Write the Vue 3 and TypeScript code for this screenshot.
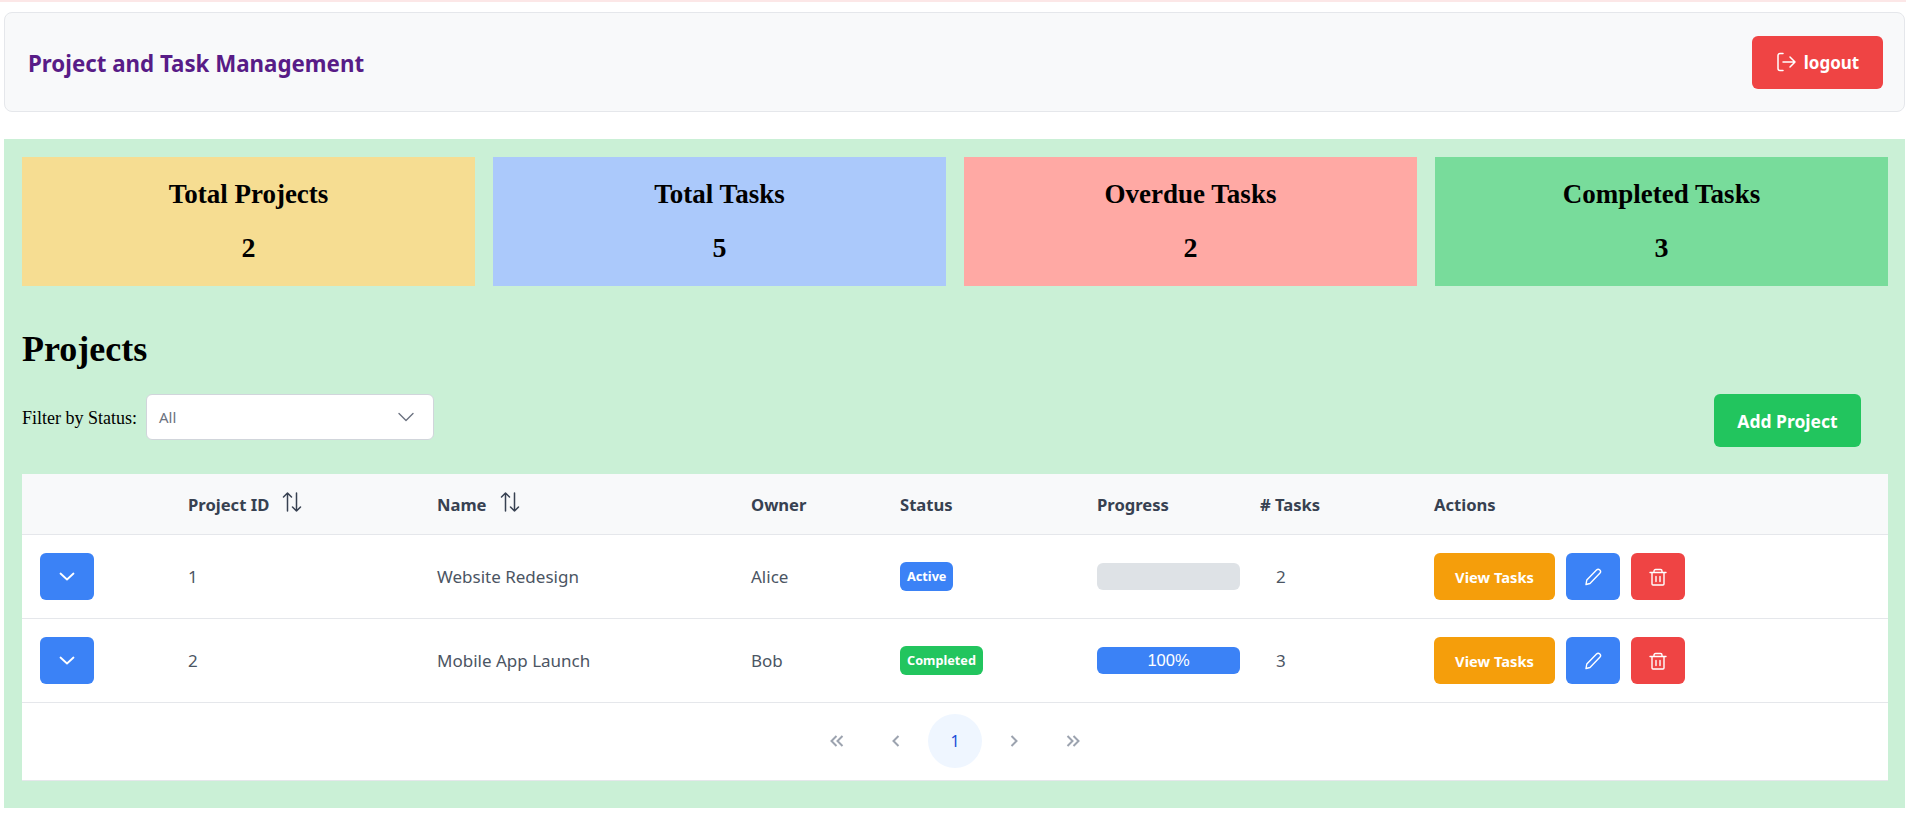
<script setup lang="ts">
interface Stat {
  label: string;
  value: number;
  tone: string;
}

interface Project {
  id: number;
  name: string;
  owner: string;
  status: string;
  progress: number;
  tasks: number;
}

const stats: Stat[] = [
  { label: "Total Projects", value: 2, tone: "yellow" },
  { label: "Total Tasks", value: 5, tone: "blue" },
  { label: "Overdue Tasks", value: 2, tone: "red" },
  { label: "Completed Tasks", value: 3, tone: "green" },
];

const projects: Project[] = [
  { id: 1, name: "Website Redesign", owner: "Alice", status: "Active", progress: 0, tasks: 2 },
  { id: 2, name: "Mobile App Launch", owner: "Bob", status: "Completed", progress: 100, tasks: 3 },
];
</script>

<template>
  <div class="page">
    <header class="header">
      <h1>Project and Task Management</h1>
      <button class="btn logout">
        <svg width="20" height="20" viewBox="0 0 20 20" fill="none" stroke="currentColor" stroke-width="1.5" stroke-linecap="round" stroke-linejoin="round">
          <path d="M7 1.5H4a2 2 0 0 0-2 2v13a2 2 0 0 0 2 2h3" />
          <path d="M7 10h12M14 5l5 5-5 5" />
        </svg>
        logout
      </button>
    </header>

    <main class="board">
      <section class="stats">
        <div v-for="s in stats" :key="s.label" class="stat" :class="s.tone">
          <h2>{{ s.label }}</h2>
          <p>{{ s.value }}</p>
        </div>
      </section>

      <h2 class="title">Projects</h2>

      <div class="toolbar">
        <div class="filter">
          <label>Filter by Status:</label>
          <div class="select">
            <span>All</span>
            <svg width="16" height="16" viewBox="0 0 16 16" fill="none" stroke="currentColor" stroke-width="1.4" stroke-linecap="round" stroke-linejoin="round">
              <path d="M1 4.5 8 11.5l7-7" />
            </svg>
          </div>
        </div>
        <button class="btn add">Add Project</button>
      </div>

      <div class="card">
        <table>
          <colgroup>
            <col style="width: 150px" />
            <col style="width: 249px" />
            <col style="width: 314px" />
            <col style="width: 149px" />
            <col style="width: 197px" />
            <col style="width: 163px" />
            <col style="width: 174px" />
            <col />
          </colgroup>
          <thead>
            <tr>
              <th></th>
              <th>
                <span class="sort">Project ID
                  <svg width="20" height="20" viewBox="0 0 20 20" fill="none" stroke="currentColor" stroke-width="1.5" stroke-linecap="round" stroke-linejoin="round">
                    <path d="M5.5 19V1M1.5 5l4-4 4 4M14.5 1v18M10.5 15l4 4 4-4" />
                  </svg>
                </span>
              </th>
              <th>
                <span class="sort">Name
                  <svg width="20" height="20" viewBox="0 0 20 20" fill="none" stroke="currentColor" stroke-width="1.5" stroke-linecap="round" stroke-linejoin="round">
                    <path d="M5.5 19V1M1.5 5l4-4 4 4M14.5 1v18M10.5 15l4 4 4-4" />
                  </svg>
                </span>
              </th>
              <th>Owner</th>
              <th>Status</th>
              <th>Progress</th>
              <th># Tasks</th>
              <th>Actions</th>
            </tr>
          </thead>
          <tbody>
            <tr v-for="p in projects" :key="p.id">
              <td class="first">
                <button class="btn expand">
                  <svg width="16" height="16" viewBox="0 0 16 16" fill="none" stroke="currentColor" stroke-width="1.8" stroke-linecap="round" stroke-linejoin="round">
                    <path d="M1.5 4.500 8 10.500l6.500-6" />
                  </svg>
                </button>
              </td>
              <td>{{ p.id }}</td>
              <td>{{ p.name }}</td>
              <td>{{ p.owner }}</td>
              <td>
                <span class="badge" :class="p.status.toLowerCase()">{{ p.status }}</span>
              </td>
              <td>
                <div class="progress">
                  <div v-if="p.progress" class="bar" :style="{ width: p.progress + '%' }">{{ p.progress }}%</div>
                </div>
              </td>
              <td class="count">{{ p.tasks }}</td>
              <td>
                <div class="actions">
                  <button class="btn view">View Tasks</button>
                  <button class="btn icon edit">
                    <svg width="18" height="18" viewBox="0 0 18 18" fill="none" stroke="currentColor" stroke-width="1.4" stroke-linecap="round" stroke-linejoin="round">
                      <path d="M12.5 2a2.3 2.3 0 0 1 3.300 3.300L6 15.500l-4 1 .8-4.500z" />
                    </svg>
                  </button>
                  <button class="btn icon delete">
                    <svg width="18" height="18" viewBox="0 0 18 18" fill="none" stroke="currentColor" stroke-width="1.4" stroke-linecap="round" stroke-linejoin="round">
                      <path d="M1 4.500h16M5 4.500V3a1.500 1.500 0 0 1 1.500-1.500h5A1.500 1.500 0 0 1 13 3v1.500M3 4.500V16a1 1 0 0 0 1 1h10a1 1 0 0 0 1-1V4.500M7 8.500v5M11 8.500v5" />
                    </svg>
                  </button>
                </div>
              </td>
            </tr>
          </tbody>
        </table>

        <nav class="pager">
          <span class="page-btn">
            <svg width="14" height="14" viewBox="0 0 14 14" fill="none" stroke="currentColor" stroke-width="2" stroke-linejoin="miter"><path d="M6.500 2 1.500 7l5 5M12.500 2l-5 5 5 5" /></svg>
          </span>
          <span class="page-btn">
            <svg width="14" height="14" viewBox="0 0 14 14" fill="none" stroke="currentColor" stroke-width="2" stroke-linejoin="miter"><path d="M9.500 2l-5 5 5 5" /></svg>
          </span>
          <span class="page-btn current">1</span>
          <span class="page-btn">
            <svg width="14" height="14" viewBox="0 0 14 14" fill="none" stroke="currentColor" stroke-width="2" stroke-linejoin="miter"><path d="M4.500 2l5 5-5 5" /></svg>
          </span>
          <span class="page-btn">
            <svg width="14" height="14" viewBox="0 0 14 14" fill="none" stroke="currentColor" stroke-width="2" stroke-linejoin="miter"><path d="M1.500 2l5 5-5 5M7.500 2l5 5-5 5" /></svg>
          </span>
        </nav>
      </div>
    </main>
  </div>
</template>

<style>
html,
body {
  background: #ffffff;
}
</style>

<style scoped>
.page {
  height: 816px;
  overflow: hidden;
  padding: 12px 1px 0 4px;
  box-sizing: border-box;
  border-top: 2px solid #fce7e7;
  font-family: "Noto Sans", sans-serif;
}

.header {
  display: flex;
  justify-content: space-between;
  align-items: center;
  height: 100px;
  box-sizing: border-box;
  padding: 0 21px 0 23px;
  margin-top: -2px;
  background: #f8f9fa;
  border: 1px solid #e5e7eb;
  border-radius: 8px;
}

h1 {
  margin: 2px 0 0;
  font-size: 22.3px;
  font-weight: 700;
  color: #581c87;
}

.btn {
  border: 0;
  border-radius: 6px;
  color: #ffffff;
  font-family: inherit;
  font-weight: 700;
  display: inline-flex;
  align-items: center;
  justify-content: center;
  padding: 0;
}

.logout {
  width: 131px;
  height: 53px;
  gap: 8px;
  background: #ef4444;
  font-size: 17px;
}

.board {
  margin-top: 27px;
  height: 669px;
  box-sizing: border-box;
  padding: 18px 17px 0 18px;
  background: #caf0d6;
}

.stats {
  display: grid;
  grid-template-columns: repeat(4, 1fr);
  gap: 18px;
}

.stat {
  height: 129px;
  text-align: center;
  font-family: "Liberation Serif", serif;
  color: #000000;
}

.stat h2 {
  margin: 0;
  padding-top: 23px;
  font-size: 27px;
  line-height: 28px;
  font-weight: 700;
}

.stat p {
  margin: 26px 0 0;
  font-size: 28px;
  line-height: 28px;
  font-weight: 700;
}

.yellow {
  background: #f6dd92;
}

.blue {
  background: #abc9fb;
}

.red {
  background: #ffa9a4;
}

.green {
  background: #78dc9b;
}

.title {
  margin: 43px 0 0;
  font-family: "Liberation Serif", serif;
  font-size: 36px;
  line-height: 41px;
  font-weight: 700;
  color: #000000;
}

.toolbar {
  display: flex;
  justify-content: space-between;
  align-items: flex-start;
  margin-top: 24px;
  padding-right: 27px;
}

.filter {
  display: flex;
  align-items: center;
  gap: 9px;
}

label {
  margin-top: 2px;
  font-family: "Liberation Serif", serif;
  font-size: 18px;
  color: #000000;
}

.select {
  display: flex;
  justify-content: space-between;
  align-items: center;
  width: 288px;
  height: 46px;
  box-sizing: border-box;
  padding: 0 19px 0 12px;
  background: #ffffff;
  border: 1px solid #d1d5db;
  border-radius: 6px;
  font-size: 15px;
  color: #6b7280;
}

.add {
  width: 147px;
  height: 53px;
  background: #22c55e;
  font-size: 17.5px;
}

.card {
  margin-top: 27px;
  background: #ffffff;
  border-bottom: 1px solid #e5e7eb;
}

table {
  width: 100%;
  table-layout: fixed;
  border-collapse: collapse;
}

th {
  height: 60px;
  padding: 0 16px;
  text-align: left;
  font-size: 16.6px;
  font-weight: 700;
  color: #374151;
  background: #f8f9fa;
  border-bottom: 1px solid #e5e7eb;
}

td {
  height: 83px;
  padding: 0 16px;
  font-size: 17px;
  color: #4b5563;
  border-bottom: 1px solid #e5e7eb;
}

td.first {
  padding-left: 18px;
}

td.count {
  padding-left: 32px;
}

.sort {
  display: inline-flex;
  align-items: center;
  gap: 13px;
}

.sort svg {
  margin-top: -4px;
}

.expand {
  width: 54px;
  height: 47px;
  background: #3b82f6;
}

.badge {
  display: inline-block;
  height: 29px;
  line-height: 29px;
  padding: 0 7px;
  border-radius: 6px;
  color: #ffffff;
  font-size: 12.7px;
  font-weight: 700;
  vertical-align: middle;
}

.active {
  background: #3b82f6;
}

.completed {
  background: #22c55e;
}

.progress {
  width: 143px;
  height: 27px;
  border-radius: 6px;
  background: #dee2e6;
  overflow: hidden;
}

.bar {
  height: 100%;
  line-height: 27px;
  text-align: center;
  font-family: "Liberation Sans", sans-serif;
  font-size: 16.5px;
  color: #ffffff;
  background: #3b82f6;
}

.actions {
  display: flex;
  gap: 11px;
}

.view {
  width: 121px;
  height: 47px;
  background: #f59e0b;
  font-size: 14.7px;
}

.icon {
  width: 54px;
  height: 47px;
}

.edit {
  background: #3b82f6;
}

.delete {
  background: #ef4444;
}

.pager {
  display: flex;
  justify-content: center;
  align-items: center;
  gap: 5px;
  height: 76px;
  padding-bottom: 1px;
}

.page-btn {
  width: 54px;
  height: 54px;
  display: flex;
  align-items: center;
  justify-content: center;
  border-radius: 50%;
  color: #9ca3af;
  font-size: 16px;
}

.current {
  background: #eff6ff;
  color: #1d4ed8;
}
</style>
